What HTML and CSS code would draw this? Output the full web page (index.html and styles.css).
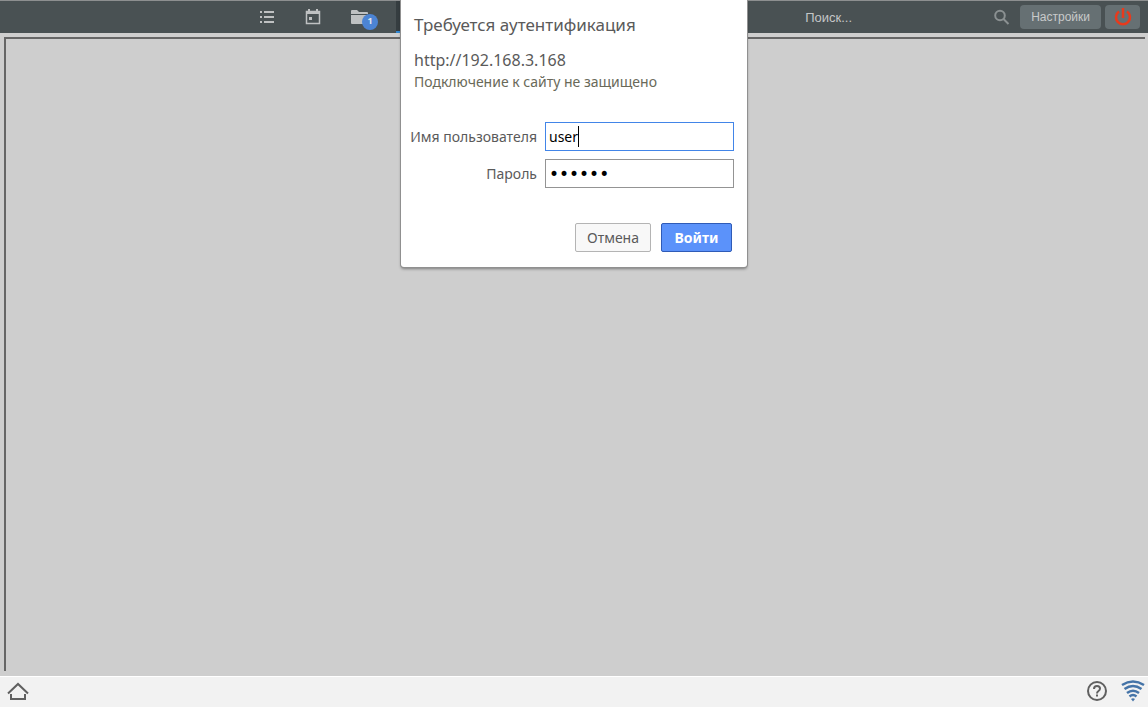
FILE: index.html
```
<!DOCTYPE html>
<html lang="ru">
<head>
<meta charset="UTF-8">
<meta name="viewport" content="width=device-width, initial-scale=1.0">
<title>Требуется аутентификация</title>
<link rel="stylesheet" href="styles.css">
</head>
<body>
    <header class="toolbar">
        <nav class="tabs">
            <a href="#" class="tab" aria-label="Список">
                <svg width="16" height="16" viewBox="0 0 16 16" fill="#bfc1c2"><path d="M1 2h2v2H1zM5 2h10v2H5zM1 7h2v2H1zM5 7h10v2H5zM1 12h2v2H1zM5 12h10v2H5z"/></svg>
            </a>
            <a href="#" class="tab" aria-label="Календарь">
                <svg width="16" height="16" viewBox="0 0 16 16"><path d="M1.500 2.500h13v12h-13z" fill="none" stroke="#bfc1c2" stroke-width="1.500"/><path d="M1 2h14v3H1zM3 0h2v3H3zM11 0h2v3h-2zM4 8h3v3H4z" fill="#bfc1c2"/></svg>
            </a>
            <a href="#" class="tab files" aria-label="Файлы">
                <svg width="18" height="16" viewBox="0 0 18 16" fill="#bfc1c2"><path d="M0 2q0-1 1-1h5l2 2h8q1 0 1 1v1H0z"/><path d="M0 6h17v8q0 1-1 1H1q-1 0-1-1z"/></svg>
                <span class="badge">1</span>
            </a>
            <a href="#" class="tab active" aria-label="Главная"></a>
        </nav>
        <form class="search">
            <input type="search" class="search-input" placeholder="Поиск..." aria-label="Поиск">
            <svg width="16" height="16" viewBox="0 0 16 16" fill="none" stroke="#8b9192" stroke-width="2"><circle cx="6" cy="6.500" r="4.800"/><path d="M9.500 10l5 5"/></svg>
        </form>
        <button type="button" class="tool-button">Настройки</button>
        <button type="button" class="tool-button power" aria-label="Выход">
            <svg width="18" height="18" viewBox="0 0 18 18" fill="none" stroke="#e83a1c" stroke-width="2.500"><path d="M5 3.500a7 7 0 1 0 8 0M9 0v10"/></svg>
        </button>
    </header>

    <main class="content">
        <div class="frame"></div>
    </main>

    <footer class="taskbar">
        <a href="#" class="home" aria-label="Домой">
            <svg width="24" height="20" viewBox="0 0 24 20" fill="none" stroke="#606060" stroke-width="2"><path d="M2 12.500L12 3l10 9.500M5 13v5h14v-5"/></svg>
        </a>
        <a href="#" aria-label="Справка">
            <svg width="22" height="22" viewBox="0 0 22 22" fill="none" stroke="#606060" stroke-width="2"><circle cx="11" cy="11" r="9"/><path d="M8 9q0-3 3-3t3 2.500q0 1.500-1.500 2.500T11 13.500M11 14.500v2"/></svg>
        </a>
        <a href="#" aria-label="Сеть">
            <svg width="24" height="22" viewBox="0 0 24 22" fill="none" stroke="#4574a8" stroke-width="2.500"><path d="M1 5q11-7 22 0M3.500 9q8.500-6 17 0M6 13q6-4.500 12 0M8.500 16.500q3.500-3 7 0"/><path d="M10 19q2-1.500 4 0l-2 2.500z" fill="#4574a8" stroke="none"/></svg>
        </a>
    </footer>

    <form class="dialog" role="dialog" aria-labelledby="dialog-title">
        <h1 id="dialog-title">Требуется аутентификация</h1>
        <div class="site">http://192.168.3.168</div>
        <div class="warning">Подключение к сайту не защищено</div>
        <div class="fields">
            <label for="username">Имя пользователя</label>
            <div class="field">
                <input type="text" id="username" class="field-input focused" name="username" value="user">
                <span class="caret"></span>
            </div>
            <label for="password">Пароль</label>
            <div class="field">
                <input type="password" id="password" class="field-input" name="password" value="secret">
            </div>
        </div>
        <div class="actions">
            <button type="button" class="cancel-button">Отмена</button>
            <button type="submit" class="login-button">Войти</button>
        </div>
    </form>
</body>
</html>
```
FILE: styles.css
```
* {
    box-sizing: border-box;
}

body {
    margin: 0;
    min-height: 100vh;
    display: flex;
    flex-direction: column;
    background: #cecece;
    font-family: "Noto Sans", sans-serif;
    font-size: 14px;
    color: #5a5a5a;
}

svg {
    display: block;
}

.toolbar {
    display: flex;
    align-items: center;
    height: 33px;
    padding-right: 8px;
    border-top: 1px solid #8d8f90;
    background: #495153;
    font-family: "Liberation Sans", Arial, sans-serif;
}

.tabs {
    display: flex;
    align-self: stretch;
    margin-left: 244px;
}

.tab {
    position: relative;
    display: flex;
    align-items: center;
    justify-content: center;
    width: 46px;
}

.tab.files {
    width: 60px;
    padding-right: 12px;
}

.tab.active {
    background: #353d40;
    border-bottom: 2px solid #2f86d2;
}

.badge {
    position: absolute;
    right: 18px;
    bottom: 3px;
    width: 16px;
    height: 16px;
    border-radius: 50%;
    background: #4c84d4;
    color: #e4e8ee;
    font-family: "Noto Sans", sans-serif;
    font-size: 9px;
    font-weight: bold;
    line-height: 14px;
    text-align: center;
}

.search {
    display: flex;
    align-items: center;
    width: 205px;
    margin-left: auto;
    margin-right: 10px;
}

.search-input {
    flex: 1;
    min-width: 0;
    padding: 0;
    border: none;
    outline: none;
    background: none;
    color: #c4c6c7;
    font-family: inherit;
    font-size: 13px;
}

.search-input::placeholder {
    color: #c4c6c7;
}

.tool-button {
    height: 24px;
    padding: 0 11px;
    border: none;
    border-radius: 4px;
    background: #667073;
    color: #c8caca;
    font-family: inherit;
    font-size: 12px;
}

.tool-button.power {
    width: 35px;
    margin-left: 4px;
    padding: 0 9px;
}

.content {
    flex: 1;
    display: flex;
    padding: 4px 3px 5px 4px;
}

.frame {
    flex: 1;
    border-top: 2px solid #666;
    border-left: 2px solid #666;
}

.taskbar {
    display: flex;
    align-items: center;
    gap: 13px;
    height: 31px;
    padding: 0 3px 2px 6px;
    border-top: 1px solid #fff;
    background: #f2f2f2;
}

.home {
    margin-right: auto;
}

.dialog {
    position: absolute;
    top: 0;
    left: 50%;
    transform: translateX(-50%);
    width: 346px;
    padding: 12px 13px 15px;
    border-radius: 0 0 3px 3px;
    background: #fff;
    box-shadow: 0 0 0 1px #909090, 0 2px 3px rgba(0, 0, 0, 0.4);
}

h1 {
    margin: 0 0 12px;
    font-size: 17px;
    font-weight: normal;
    line-height: 26px;
}

.site,
.warning {
    line-height: 21px;
}

.site {
    font-size: 16px;
}

.warning {
    color: #696959;
}

.fields {
    display: grid;
    grid-template-columns: auto 189px;
    justify-content: end;
    align-items: center;
    gap: 8px;
    margin-top: 30px;
}

label {
    text-align: right;
    white-space: nowrap;
}

.field {
    position: relative;
}

.field-input {
    display: block;
    width: 100%;
    height: 29px;
    padding: 0 3px;
    border: 1px solid #949494;
    outline: none;
    background: #fff;
    color: #000;
    font-family: inherit;
    font-size: 14px;
}

.field-input[type="password"] {
    font-family: "DejaVu Sans", sans-serif;
    font-size: 17px;
}

.field-input.focused {
    border-color: #4285e8;
}

.caret {
    position: absolute;
    top: 4px;
    left: 33px;
    width: 1px;
    height: 21px;
    background: #000;
}

.actions {
    display: flex;
    justify-content: flex-end;
    gap: 10px;
    margin: 35px 2px 0 0;
}

.cancel-button,
.login-button {
    height: 29px;
    padding: 0 10px;
    border: 1px solid #b4b4b4;
    border-radius: 2px;
    background: #f8f8f8;
    color: #5a5a5a;
    font-family: inherit;
    font-size: 14px;
}

.cancel-button {
    width: 76px;
}

.login-button {
    width: 71px;
    border-color: #2f5bb7;
    background: #5b92fa;
    color: #fff;
    font-weight: bold;
}
```
